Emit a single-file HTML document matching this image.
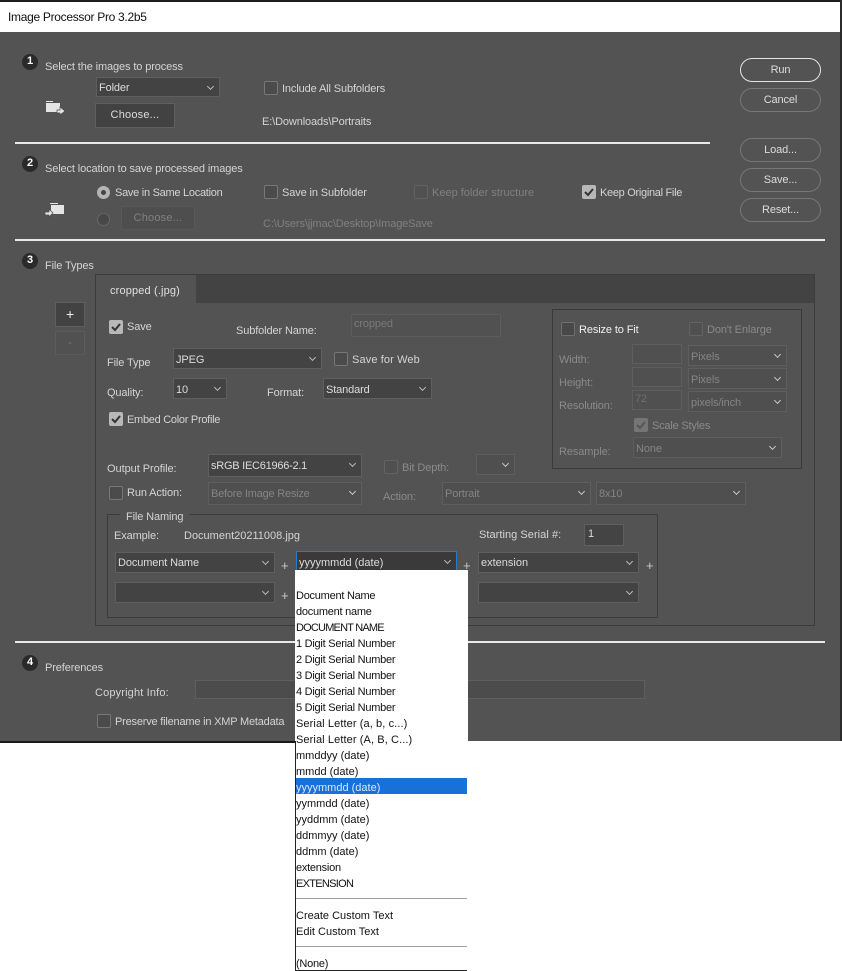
<!DOCTYPE html>
<html><head><meta charset="utf-8"><title>Image Processor Pro 3.2b5</title>
<style>
html,body{margin:0;padding:0;background:#fff}
#r{position:relative;width:842px;height:971px;overflow:hidden;background:#fff;font:11px/16px "Liberation Sans",sans-serif;letter-spacing:-.12px;color:#d4d4d4}
#r div{position:absolute;box-sizing:border-box;white-space:nowrap}
.t{height:16px;margin-top:1px}
.d{color:#808080}
.e{color:#8a8a8a}
.n{width:16px;height:16px;border-radius:50%;background:#2a2a2a;color:#fff;font-weight:bold;font-size:11px;line-height:15px;text-align:center;letter-spacing:0}
.c{width:14px;height:14px;border:1px solid #777;border-radius:2px;background:#4b4b4b}
.c.dim{border-color:#636363;background:#505050}
.k{width:14px;height:14px;border-radius:2px;background:#b8b8b8}
.k.dim{background:#757575}
.k svg{position:absolute;left:0;top:0}
.s{border:1px solid #5f5f5f;background:#434343;color:#dcdcdc;padding:2px 0 0 2px;line-height:16px}
.s:after{content:"";position:absolute;right:6px;top:6px;width:4px;height:4px;border-right:1px solid #bbb;border-bottom:1px solid #bbb;transform:rotate(45deg)}
.s.dim{background:#4f4f4f;border-color:#5e5e5e;color:#858585}
.s.dim:after{border-color:#c8c8c8}
.l{padding-top:3px}
.i{border:1px solid #5f5f5f;background:#4c4c4c}
.b{border:1px solid #777;border-radius:12px;text-align:center;line-height:23px;height:24px;width:81px;left:740px;color:#dcdcdc}
.h{background:#e9e9e9;height:2px}
.p{color:#c8c8c8;font-size:13px}
.m{left:296px;height:16px;margin-top:1px;color:#111;font-size:11px;letter-spacing:-.25px}
.m.z{letter-spacing:0}
</style></head><body>
<div id="r">
<div style="left:0;top:0;width:842px;height:2px;background:#1e1e1e"></div>
<div style="left:0;top:32px;width:840px;height:709px;background:#535353"></div>
<div style="left:840px;top:0;width:2px;height:741px;background:#2b2b2b"></div>
<div style="left:0;top:741px;width:296px;height:2px;background:#1a1a1a"></div>
<div class="t" style="left:8px;top:8px;color:#111;font-size:12px;letter-spacing:-.3px">Image Processor Pro 3.2b5</div>

<div class="n" style="left:22px;top:54px">1</div>
<div class="t" style="left:45px;top:58px">Select the images to process</div>
<div class="s" style="left:96px;top:77px;width:124px;height:20px">Folder</div>
<div class="c" style="left:264px;top:81px"></div>
<div class="t" style="left:282px;top:80px">Include All Subfolders</div>
<div class="i" style="left:95px;top:103px;width:80px;height:25px;background:#424242;text-align:center;line-height:23px;color:#dcdcdc;letter-spacing:.2px">Choose...</div>
<div class="t" style="left:262px;top:113px">E:\Downloads\Portraits</div>
<svg style="position:absolute;left:44px;top:98px" width="24" height="20"><path d="M2 3h7v1H2zM2 5h14v9H2z" fill="#e4e4e4"/><path d="M13 12h3v-3l5 4-5 4v-2h-3z" fill="#e4e4e4" stroke="#4a4a4a" stroke-width=".7"/></svg>
<div class="h" style="left:15px;top:142px;width:695px"></div>

<div class="b" style="top:58px;border-color:#e4e4e4">Run</div>
<div class="b" style="top:88px;height:24px">Cancel</div>
<div class="b" style="top:138px">Load...</div>
<div class="b" style="top:168px">Save...</div>
<div class="b" style="top:198px">Reset...</div>

<div class="n" style="left:22px;top:156px">2</div>
<div class="t" style="left:45px;top:160px">Select location to save processed images</div>
<div style="left:97px;top:186px;width:13px;height:13px;border-radius:50%;background:#b4b4b4"></div>
<div style="left:101px;top:190px;width:5px;height:5px;border-radius:50%;background:#444"></div>
<div class="t" style="left:115px;top:184px;letter-spacing:-.27px">Save in Same Location</div>
<div class="c" style="left:264px;top:185px"></div>
<div class="t" style="left:282px;top:184px">Save in Subfolder</div>
<div class="c dim" style="left:414px;top:185px"></div>
<div class="t d" style="left:432px;top:184px;letter-spacing:0">Keep folder structure</div>
<div class="k" style="left:582px;top:185px"><svg width="14" height="14"><path d="M3 7l3 3 5-6" fill="none" stroke="#333" stroke-width="2"/></svg></div>
<div class="t" style="left:600px;top:184px;letter-spacing:-.3px">Keep Original File</div>
<svg style="position:absolute;left:44px;top:200px" width="24" height="20"><path d="M6 3h8v1H6zM7 5h13v9H7z" fill="#e4e4e4"/><path d="M1 12h4v-3l4 4-4 4v-2H1z" fill="#e4e4e4" stroke="#4a4a4a" stroke-width=".7"/></svg>
<div style="left:97px;top:213px;width:13px;height:13px;border-radius:50%;background:#474747;border:1px solid #666"></div>
<div class="i" style="left:121px;top:206px;width:74px;height:24px;background:#4e4e4e;text-align:center;line-height:22px;color:#808080;border-color:#585858;letter-spacing:.2px">Choose...</div>
<div class="t d" style="left:263px;top:215px">C:\Users\jjmac\Desktop\ImageSave</div>
<div class="h" style="left:15px;top:239px;width:810px"></div>

<div class="n" style="left:22px;top:253px">3</div>
<div class="t" style="left:45px;top:257px">File Types</div>
<div style="left:95px;top:274px;width:720px;height:352px;border:1px solid #3c3c3c"></div>
<div style="left:96px;top:275px;width:718px;height:28px;background:#434343"></div>
<div style="left:96px;top:275px;width:100px;height:28px;background:#535353"></div>
<div class="t" style="left:110px;top:282px;color:#e0e0e0;letter-spacing:.15px">cropped (.jpg)</div>
<div class="i" style="left:55px;top:302px;width:30px;height:25px;background:#424242;text-align:center;line-height:22px;font-size:14px;color:#eee">+</div>
<div class="i" style="left:55px;top:331px;width:30px;height:24px;background:#515151;text-align:center;line-height:22px;color:#777;border-color:#5c5c5c">-</div>

<div class="k" style="left:109px;top:320px"><svg width="14" height="14"><path d="M3 7l3 3 5-6" fill="none" stroke="#333" stroke-width="2"/></svg></div>
<div class="t" style="left:127px;top:318px">Save</div>
<div class="t" style="left:236px;top:322px">Subfolder Name:</div>
<div class="i" style="left:351px;top:314px;width:150px;height:23px;background:#515151;border-color:#5c5c5c"></div>
<div class="t e" style="left:354px;top:315px;color:#7a7a7a">cropped</div>
<div class="t" style="left:107px;top:354px">File Type</div>
<div class="s l" style="left:173px;top:348px;width:149px;height:21px">JPEG</div>
<div class="c" style="left:334px;top:352px"></div>
<div class="t" style="left:352px;top:351px;letter-spacing:.12px">Save for Web</div>
<div class="t" style="left:107px;top:384px">Quality:</div>
<div class="s l" style="left:173px;top:378px;width:54px;height:21px">10</div>
<div class="t" style="left:267px;top:384px">Format:</div>
<div class="s l" style="left:323px;top:378px;width:109px;height:21px">Standard</div>
<div class="k" style="left:109px;top:412px"><svg width="14" height="14"><path d="M3 7l3 3 5-6" fill="none" stroke="#333" stroke-width="2"/></svg></div>
<div class="t" style="left:127px;top:411px;letter-spacing:-.28px">Embed Color Profile</div>

<div style="left:552px;top:309px;width:250px;height:160px;border:1px solid #3a3a3a"></div>
<div class="c" style="left:561px;top:322px;border-color:#6e6e6e;background:#484848"></div>
<div class="t" style="left:579px;top:321px;color:#f0f0f0">Resize to Fit</div>
<div class="c dim" style="left:689px;top:322px"></div>
<div class="t e" style="left:707px;top:321px">Don't Enlarge</div>
<div class="t e" style="left:559px;top:351px">Width:</div>
<div class="t e" style="left:559px;top:374px">Height:</div>
<div class="t e" style="left:559px;top:397px">Resolution:</div>
<div class="t e" style="left:559px;top:443px">Resample:</div>
<div class="i" style="left:632px;top:344px;width:50px;height:20px;background:#505050;border-color:#5e5e5e"></div>
<div class="i" style="left:632px;top:367px;width:50px;height:20px;background:#505050;border-color:#5e5e5e"></div>
<div class="i" style="left:632px;top:390px;width:50px;height:20px;background:#505050;border-color:#5e5e5e"></div>
<div class="t" style="left:635px;top:390px;color:#707070">72</div>
<div class="s dim l" style="left:688px;top:345px;width:99px;height:21px">Pixels</div>
<div class="s dim l" style="left:688px;top:368px;width:99px;height:21px">Pixels</div>
<div class="s dim l" style="left:688px;top:391px;width:99px;height:21px">pixels/inch</div>
<div class="k dim" style="left:634px;top:418px"><svg width="14" height="14"><path d="M3 7l3 3 5-6" fill="none" stroke="#555" stroke-width="2"/></svg></div>
<div class="t e" style="left:652px;top:417px;letter-spacing:-.2px">Scale Styles</div>
<div class="s dim l" style="left:633px;top:437px;width:149px;height:21px">None</div>

<div class="t" style="left:107px;top:460px;letter-spacing:-.05px">Output Profile:</div>
<div class="s l" style="left:208px;top:454px;width:154px;height:23px;letter-spacing:-.25px">sRGB IEC61966-2.1</div>
<div class="c dim" style="left:384px;top:460px"></div>
<div class="t e" style="left:402px;top:459px">Bit Depth:</div>
<div class="s dim" style="left:476px;top:454px;width:39px;height:21px"></div>
<div class="c" style="left:109px;top:486px"></div>
<div class="t" style="left:127px;top:484px">Run Action:</div>
<div class="s dim l" style="left:208px;top:482px;width:154px;height:23px;letter-spacing:-.22px">Before Image Resize</div>
<div class="t e" style="left:383px;top:488px">Action:</div>
<div class="s dim l" style="left:442px;top:482px;width:149px;height:23px">Portrait</div>
<div class="s dim l" style="left:596px;top:482px;width:150px;height:23px">8x10</div>

<div style="left:107px;top:514px;width:551px;height:104px;border:1px solid #3c3c3c"></div>
<div class="t" style="left:120px;top:508px;background:#535353;padding:0 6px">File Naming</div>
<div class="t" style="left:114px;top:527px">Example:</div>
<div class="t" style="left:184px;top:527px;letter-spacing:0">Document20211008.jpg</div>
<div class="t" style="left:479px;top:526px;letter-spacing:.05px">Starting Serial #:</div>
<div class="i" style="left:584px;top:524px;width:40px;height:22px;background:#444;color:#dcdcdc;padding:0 0 0 3px;line-height:18px">1</div>

<div class="s" style="left:115px;top:552px;width:160px;height:21px">Document Name</div>
<div class="t p" style="left:281px;top:557px">+</div>
<div class="s" style="left:296px;top:551px;width:161px;height:22px;border-color:#2f78c8;background:#3a3a3a;padding-top:3px;letter-spacing:0">yyyymmdd (date)</div>
<div class="t p" style="left:463px;top:557px">+</div>
<div class="s" style="left:478px;top:552px;width:161px;height:21px;letter-spacing:0">extension</div>
<div class="t p" style="left:646px;top:557px">+</div>
<div class="s" style="left:115px;top:582px;width:160px;height:21px"></div>
<div class="t p" style="left:281px;top:587px">+</div>
<div class="s" style="left:478px;top:582px;width:161px;height:21px"></div>

<div class="h" style="left:15px;top:641px;width:810px"></div>
<div class="n" style="left:22px;top:655px">4</div>
<div class="t" style="left:45px;top:659px">Preferences</div>
<div class="t" style="left:95px;top:684px;letter-spacing:.15px">Copyright Info:</div>
<div class="i" style="left:195px;top:680px;width:450px;height:19px;background:#4c4c4c"></div>
<div class="c" style="left:97px;top:714px"></div>
<div class="t" style="left:115px;top:713px;letter-spacing:-.2px">Preserve filename in XMP Metadata</div>

<div style="left:295px;top:570px;width:173px;height:401px;background:#fff"></div>
<div style="left:295px;top:741px;width:1px;height:230px;background:#222"></div>
<div style="left:295px;top:970px;width:172px;height:1px;background:#222"></div>
<div style="left:296px;top:778px;width:171px;height:16px;background:#1a70d9"></div>
<div style="left:296px;top:898px;width:171px;height:1px;background:#a0a0a0"></div>
<div style="left:296px;top:946px;width:171px;height:1px;background:#a0a0a0"></div>
<div class="m" style="top:587px">Document Name</div>
<div class="m" style="top:603px">document name</div>
<div class="m" style="top:619px;letter-spacing:-.8px">DOCUMENT NAME</div>
<div class="m" style="top:635px">1 Digit Serial Number</div>
<div class="m" style="top:651px">2 Digit Serial Number</div>
<div class="m" style="top:667px">3 Digit Serial Number</div>
<div class="m" style="top:683px">4 Digit Serial Number</div>
<div class="m" style="top:699px">5 Digit Serial Number</div>
<div class="m" style="top:715px;letter-spacing:.1px">Serial Letter (a, b, c...)</div>
<div class="m" style="top:731px;letter-spacing:.1px">Serial Letter (A, B, C...)</div>
<div class="m z" style="top:747px">mmddyy (date)</div>
<div class="m z" style="top:763px">mmdd (date)</div>
<div class="m z" style="top:779px;color:#d8e8ff">yyyymmdd (date)</div>
<div class="m z" style="top:795px">yymmdd (date)</div>
<div class="m z" style="top:811px">yyddmm (date)</div>
<div class="m z" style="top:827px">ddmmyy (date)</div>
<div class="m z" style="top:843px">ddmm (date)</div>
<div class="m" style="top:859px">extension</div>
<div class="m" style="top:875px;letter-spacing:-.7px">EXTENSION</div>
<div class="m z" style="top:907px">Create Custom Text</div>
<div class="m z" style="top:923px">Edit Custom Text</div>
<div class="m" style="top:955px">(None)</div>
</div>
</body></html>
